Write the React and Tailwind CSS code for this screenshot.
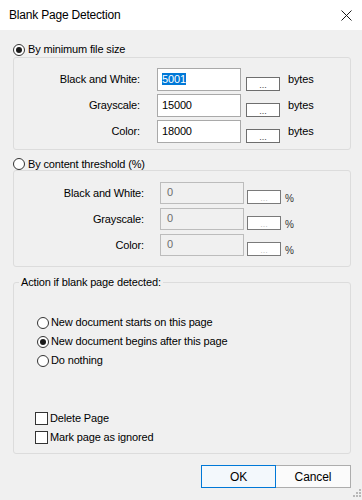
import React from "react";

function Radio({ checked }) {
  return (
    <div className="w-[12px] h-[12px] rounded-full border border-[#333333] bg-white flex items-center justify-center shrink-0">
      {checked && <div className="w-[6px] h-[6px] rounded-full bg-[#1a1a1a]" />}
    </div>
  );
}

function Check() {
  return <div className="w-[13px] h-[13px] border border-[#333333] bg-white shrink-0" />;
}

function Dots({ disabled }) {
  return (
    <div
      className={
        "w-[34px] h-[14px] border bg-white flex items-end justify-center shrink-0 " +
        (disabled ? "border-[#7a7a7a]" : "border-[#6e6e6e]")
      }
    >
      <span className={"text-[9px] leading-[9px] tracking-[0px] " + (disabled ? "text-[#c4c4c4]" : "text-[#444]")}>
        ...
      </span>
    </div>
  );
}

function SizeRow({ label, value, selected }) {
  return (
    <div className="flex items-start h-[23px]">
      <div className="w-[126px] h-[23px] flex items-center justify-end">{label}</div>
      <div className="ml-[17px] w-[84px] h-[23px] border border-[#a9a9a9] bg-white pl-[4px] pt-[4px] leading-[13px] shrink-0">
        {selected ? <span className="bg-[#0078d7] text-white">{value}</span> : value}
      </div>
      <div className="ml-[5px] mt-[9px]">
        <Dots />
      </div>
      <div className="ml-[8px] h-[23px] flex items-center">bytes</div>
    </div>
  );
}

function PctRow({ label }) {
  return (
    <div className="flex items-start h-[22px]">
      <div className="w-[130px] h-[22px] flex items-center justify-end">{label}</div>
      <div className="ml-[16px] w-[84px] h-[22px] border border-[#bcbcbc] bg-[#f0f0f0] pl-[6px] pt-[3px] leading-[13px] text-[#6d6d6d] shrink-0">
        0
      </div>
      <div className="ml-[3px] mt-[8px]">
        <Dots disabled />
      </div>
      <div className="ml-[4px] mt-[10px] leading-[13px] text-[10px] text-[#333]">%</div>
    </div>
  );
}

export default function App() {
  return (
    <div className="relative w-[362px] h-[500px] bg-[#f0f0f0] text-black font-['Liberation_Sans',Arial,sans-serif] text-[11px] tracking-[-0.15px] overflow-hidden">
      {/* Title bar */}
      <div className="h-[30px] bg-white flex items-center justify-between pl-[9px] pr-[10px]">
        <span className="text-[12px] tracking-[-0.2px] leading-[14px]">Blank Page Detection</span>
        <svg width="11" height="11" viewBox="0 0 11 11" className="mt-[1px]">
          <path d="M0.5 0.5 L10.5 10.5 M10.5 0.5 L0.5 10.5" stroke="#1a1a1a" strokeWidth="1" fill="none" />
        </svg>
      </div>

      <div className="pl-[13px] pr-[11px] flex flex-col">
        {/* Radio 1 */}
        <div className="mt-[13px] h-[13px] flex items-center gap-[3px]">
          <Radio checked />
          <span className="leading-[13px]">By minimum file size</span>
        </div>
        <div className="mt-[1px] border border-[#dcdcdc] rounded-[3px] pt-[10px] pb-[6px] flex flex-col gap-[3px]">
          <SizeRow label="Black and White:" value="5001" selected />
          <SizeRow label="Grayscale:" value="15000" />
          <SizeRow label="Color:" value="18000" />
        </div>

        {/* Radio 2 */}
        <div className="mt-[8px] h-[12px] flex items-center gap-[3px]">
          <Radio />
          <span className="leading-[12px]">By content threshold (%)</span>
        </div>
        <div className="border border-[#dcdcdc] rounded-[3px] pt-[11px] pb-[10px] flex flex-col gap-[4px]">
          <PctRow label="Black and White:" />
          <PctRow label="Grayscale:" />
          <PctRow label="Color:" />
        </div>

        {/* Action group */}
        <fieldset className="mt-[9px] border border-[#dcdcdc] rounded-[3px] pb-[9px]">
          <legend className="ml-[5px] px-[2px] leading-[13px]">Action if blank page detected:</legend>
          <div className="mt-[27px] pl-[23px] flex flex-col gap-[6px]">
            <div className="h-[13px] flex items-center gap-[2px]">
              <Radio />
              <span className="leading-[13px]">New document starts on this page</span>
            </div>
            <div className="h-[13px] flex items-center gap-[2px]">
              <Radio checked />
              <span className="leading-[13px]">New document begins after this page</span>
            </div>
            <div className="h-[13px] flex items-center gap-[2px]">
              <Radio />
              <span className="leading-[13px]">Do nothing</span>
            </div>
          </div>
          <div className="mt-[45px] pl-[21px] flex flex-col gap-[6px]">
            <div className="h-[13px] flex items-center gap-[2px]">
              <Check />
              <span className="leading-[13px]">Delete Page</span>
            </div>
            <div className="h-[13px] flex items-center gap-[2px]">
              <Check />
              <span className="leading-[13px]">Mark page as ignored</span>
            </div>
          </div>
        </fieldset>

        {/* Buttons */}
        <div className="mt-[11px] flex justify-end">
          <div className="w-[75px] h-[23px] border border-[#0078d7] bg-[#f3f8fc] flex items-center justify-center text-[12px] tracking-[-0.1px]">
            OK
          </div>
          <div className="w-[75px] h-[23px] border border-[#adadad] border-l-0 bg-[#fbfbfb] flex items-center justify-center text-[12px] tracking-[-0.1px]">
            Cancel
          </div>
        </div>
      </div>

      {/* Resize grip */}
      <svg width="10" height="10" viewBox="0 0 10 10" className="absolute right-[1px] bottom-[1px]">
        <rect x="8" y="0" width="2" height="2" fill="#b8b8b8" />
        <rect x="5" y="3" width="2" height="2" fill="#b8b8b8" />
        <rect x="8" y="3" width="2" height="2" fill="#b8b8b8" />
        <rect x="2" y="6" width="2" height="2" fill="#b8b8b8" />
        <rect x="5" y="6" width="2" height="2" fill="#b8b8b8" />
        <rect x="8" y="6" width="2" height="2" fill="#b8b8b8" />
      </svg>
    </div>
  );
}
